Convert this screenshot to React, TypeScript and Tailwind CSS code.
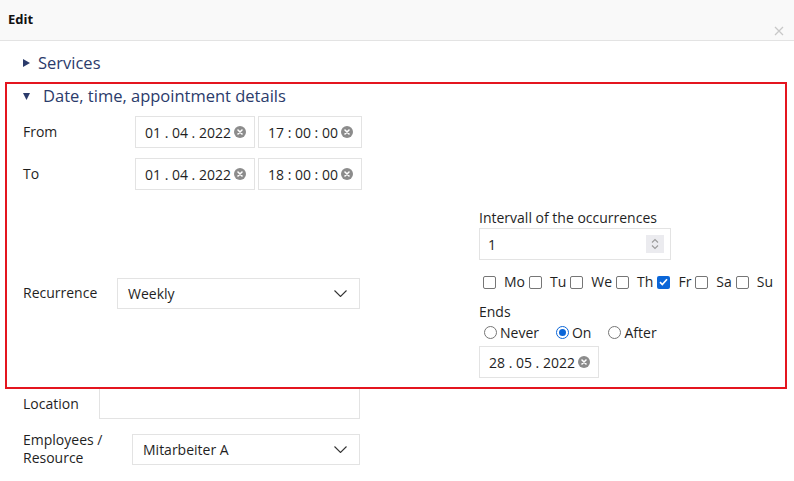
import type { ReactNode } from 'react';

const days = [
  { id: 'mo', label: 'Mo', checked: false },
  { id: 'tu', label: 'Tu', checked: false },
  { id: 'we', label: 'We', checked: false },
  { id: 'th', label: 'Th', checked: false },
  { id: 'fr', label: 'Fr', checked: true },
  { id: 'sa', label: 'Sa', checked: false },
  { id: 'su', label: 'Su', checked: false },
];

const endOptions = [
  { id: 'never', label: 'Never', selected: false },
  { id: 'on', label: 'On', selected: true },
  { id: 'after', label: 'After', selected: false },
];

function ClearIcon() {
  return (
    <svg width="12" height="12" viewBox="0 0 12 12" className="shrink-0">
      <circle cx="6" cy="6" r="6" fill="#8c8c8c" />
      <path d="M4 4l4 4M8 4l-4 4" stroke="#fff" strokeWidth="1.6" strokeLinecap="round" />
    </svg>
  );
}

function Chevron() {
  return (
    <svg width="13" height="7" viewBox="0 0 13 7" fill="none" className="shrink-0">
      <path d="M0.5 0.5l6 6 6-6" stroke="#333" strokeWidth="1.1" />
    </svg>
  );
}

// segmented date / time field with a clear button
function ClearField({ value, width }: { value: string; width: string }) {
  return (
    <div className={`${width} h-[32px] border border-[#e3e3e3] flex items-center justify-between pl-[9px] pr-[8px] text-[14px] text-[#1f1f1f]`}>
      <span className="whitespace-pre">{value}</span>
      <ClearIcon />
    </div>
  );
}

function SelectField({ value, width }: { value: string; width: string }) {
  return (
    <div className={`${width} h-[31px] border border-[#e3e3e3] flex items-center justify-between pl-[10px] pr-[12px] text-[14px] text-[#1f1f1f]`}>
      <span>{value}</span>
      <Chevron />
    </div>
  );
}

function Checkbox({ checked }: { checked: boolean }) {
  if (checked) {
    return (
      <span className="w-[13px] h-[13px] rounded-[2px] bg-[#0b66d8] flex items-center justify-center shrink-0">
        <svg width="9" height="8" viewBox="0 0 9 8" fill="none">
          <path d="M1 4.2l2.3 2.3L8 1.3" stroke="#fff" strokeWidth="1.7" />
        </svg>
      </span>
    );
  }
  return <span className="block w-[13px] h-[13px] rounded-[2px] border border-[#767676] bg-white shrink-0" />;
}

function Radio({ selected }: { selected: boolean }) {
  if (selected) {
    return (
      <span className="w-[13px] h-[13px] rounded-full border-[1.5px] border-[#0b66d8] flex items-center justify-center shrink-0">
        <span className="w-[7px] h-[7px] rounded-full bg-[#0b66d8]" />
      </span>
    );
  }
  return <span className="block w-[13px] h-[13px] rounded-full border border-[#767676] shrink-0" />;
}

function FieldRow({ label, labelWidth, children }: { label: ReactNode; labelWidth: string; children: ReactNode }) {
  return (
    <div className="flex items-center">
      <div className={`${labelWidth} shrink-0 text-[14px] leading-[18px] text-[#1f1f1f]`}>{label}</div>
      {children}
    </div>
  );
}

export default function App() {
  return (
    <div className="w-[794px] h-[481px] bg-white overflow-hidden font-['Open_Sans',sans-serif] text-[14px] text-[#1f1f1f]">
      <header className="relative h-[41px] bg-[#f9f9f9] border-b border-[#e3e3e3] px-[8px] flex items-center">
        <h1 className="text-[13px] font-bold text-[#111]">Edit</h1>
        <button className="absolute right-[10px] top-[26px] w-[10px] h-[10px]" aria-label="Close">
          <svg width="10" height="10" viewBox="0 0 10 10">
            <path d="M1 1l8 8M9 1l-8 8" stroke="#c8c8c8" strokeWidth="1.3" />
          </svg>
        </button>
      </header>

      {/* collapsed section */}
      <div className="mt-[10px] pl-[23px] flex items-center gap-[8px] h-[24px] text-[16.5px] text-[#2b3b6b]">
        <svg width="7" height="8" viewBox="0 0 7 8">
          <path d="M0 0l7 4-7 4z" fill="#2b3b6b" />
        </svg>
        <span>Services</span>
      </div>

      {/* expanded section */}
      <section className="mt-[7px] mx-[5px] w-[782px] border-2 border-[#e4151f] pl-[16px] pt-[0px] pb-[9px]">
        <div className="flex items-center gap-[13px] h-[24px] text-[16.5px] text-[#2b3b6b]">
          <svg width="7" height="7" viewBox="0 0 7 7">
            <path d="M0 0h7l-3.5 7z" fill="#2b3b6b" />
          </svg>
          <span>Date, time, appointment details</span>
        </div>

        <div className="mt-[8px]">
          <FieldRow label="From" labelWidth="w-[112px]">
            <div className="flex gap-[3px]">
              <ClearField value="01 . 04 . 2022" width="w-[120px]" />
              <ClearField value="17 : 00 : 00" width="w-[104px]" />
            </div>
          </FieldRow>
        </div>
        <div className="mt-[10px]">
          <FieldRow label="To" labelWidth="w-[112px]">
            <div className="flex gap-[3px]">
              <ClearField value="01 . 04 . 2022" width="w-[120px]" />
              <ClearField value="18 : 00 : 00" width="w-[104px]" />
            </div>
          </FieldRow>
        </div>

        <div className="mt-[18px] flex items-center">
          <div className="w-[456px] shrink-0">
            <FieldRow label="Recurrence" labelWidth="w-[94px]">
              <SelectField value="Weekly" width="w-[243px]" />
            </FieldRow>
          </div>

          <div className="flex flex-col">
            <label className="leading-[20px]">Intervall of the occurrences</label>
            <div className="w-[192px] h-[32px] border border-[#e3e3e3] flex items-center justify-between pl-[8px] pr-[6px]">
              <span>1</span>
              <span className="w-[18px] h-[18px] bg-[#ebebef] flex flex-col items-center justify-center gap-[2px]">
                <svg width="8" height="5" viewBox="0 0 8 5" fill="none">
                  <path d="M1 4.5l3-3 3 3" stroke="#9a9a9a" strokeWidth="1.1" />
                </svg>
                <svg width="8" height="5" viewBox="0 0 8 5" fill="none">
                  <path d="M1 0.5l3 3 3-3" stroke="#9a9a9a" strokeWidth="1.1" />
                </svg>
              </span>
            </div>

            <div className="mt-[12px] flex items-center h-[20px]">
              {days.map((day) => (
                <div key={day.id} className="flex items-center">
                  <span className="flex ml-[4px] mr-[8px]">
                    <Checkbox checked={day.checked} />
                  </span>
                  <span className="leading-[20px]">{day.label}</span>
                </div>
              ))}
            </div>

            <label className="mt-[10px] leading-[20px]">Ends</label>
            <div className="flex items-center h-[20px] gap-[17px] pl-[5px]">
              {endOptions.map((opt) => (
                <div key={opt.id} className="flex items-center gap-[3px]">
                  <Radio selected={opt.selected} />
                  <span>{opt.label}</span>
                </div>
              ))}
            </div>
            <div className="mt-[4px]">
              <ClearField value="28 . 05 . 2022" width="w-[120px]" />
            </div>
          </div>
        </div>
      </section>

      <div className="pl-[23px]">
        <FieldRow label="Location" labelWidth="w-[76px]">
          <div className="w-[261px] h-[30px] border border-[#e3e3e3] border-t-0" />
        </FieldRow>
        <div className="mt-[12px]">
          <FieldRow label={<>Employees /<br />Resource</>} labelWidth="w-[109px]">
            <SelectField value="Mitarbeiter A" width="w-[228px]" />
          </FieldRow>
        </div>
      </div>
    </div>
  );
}
